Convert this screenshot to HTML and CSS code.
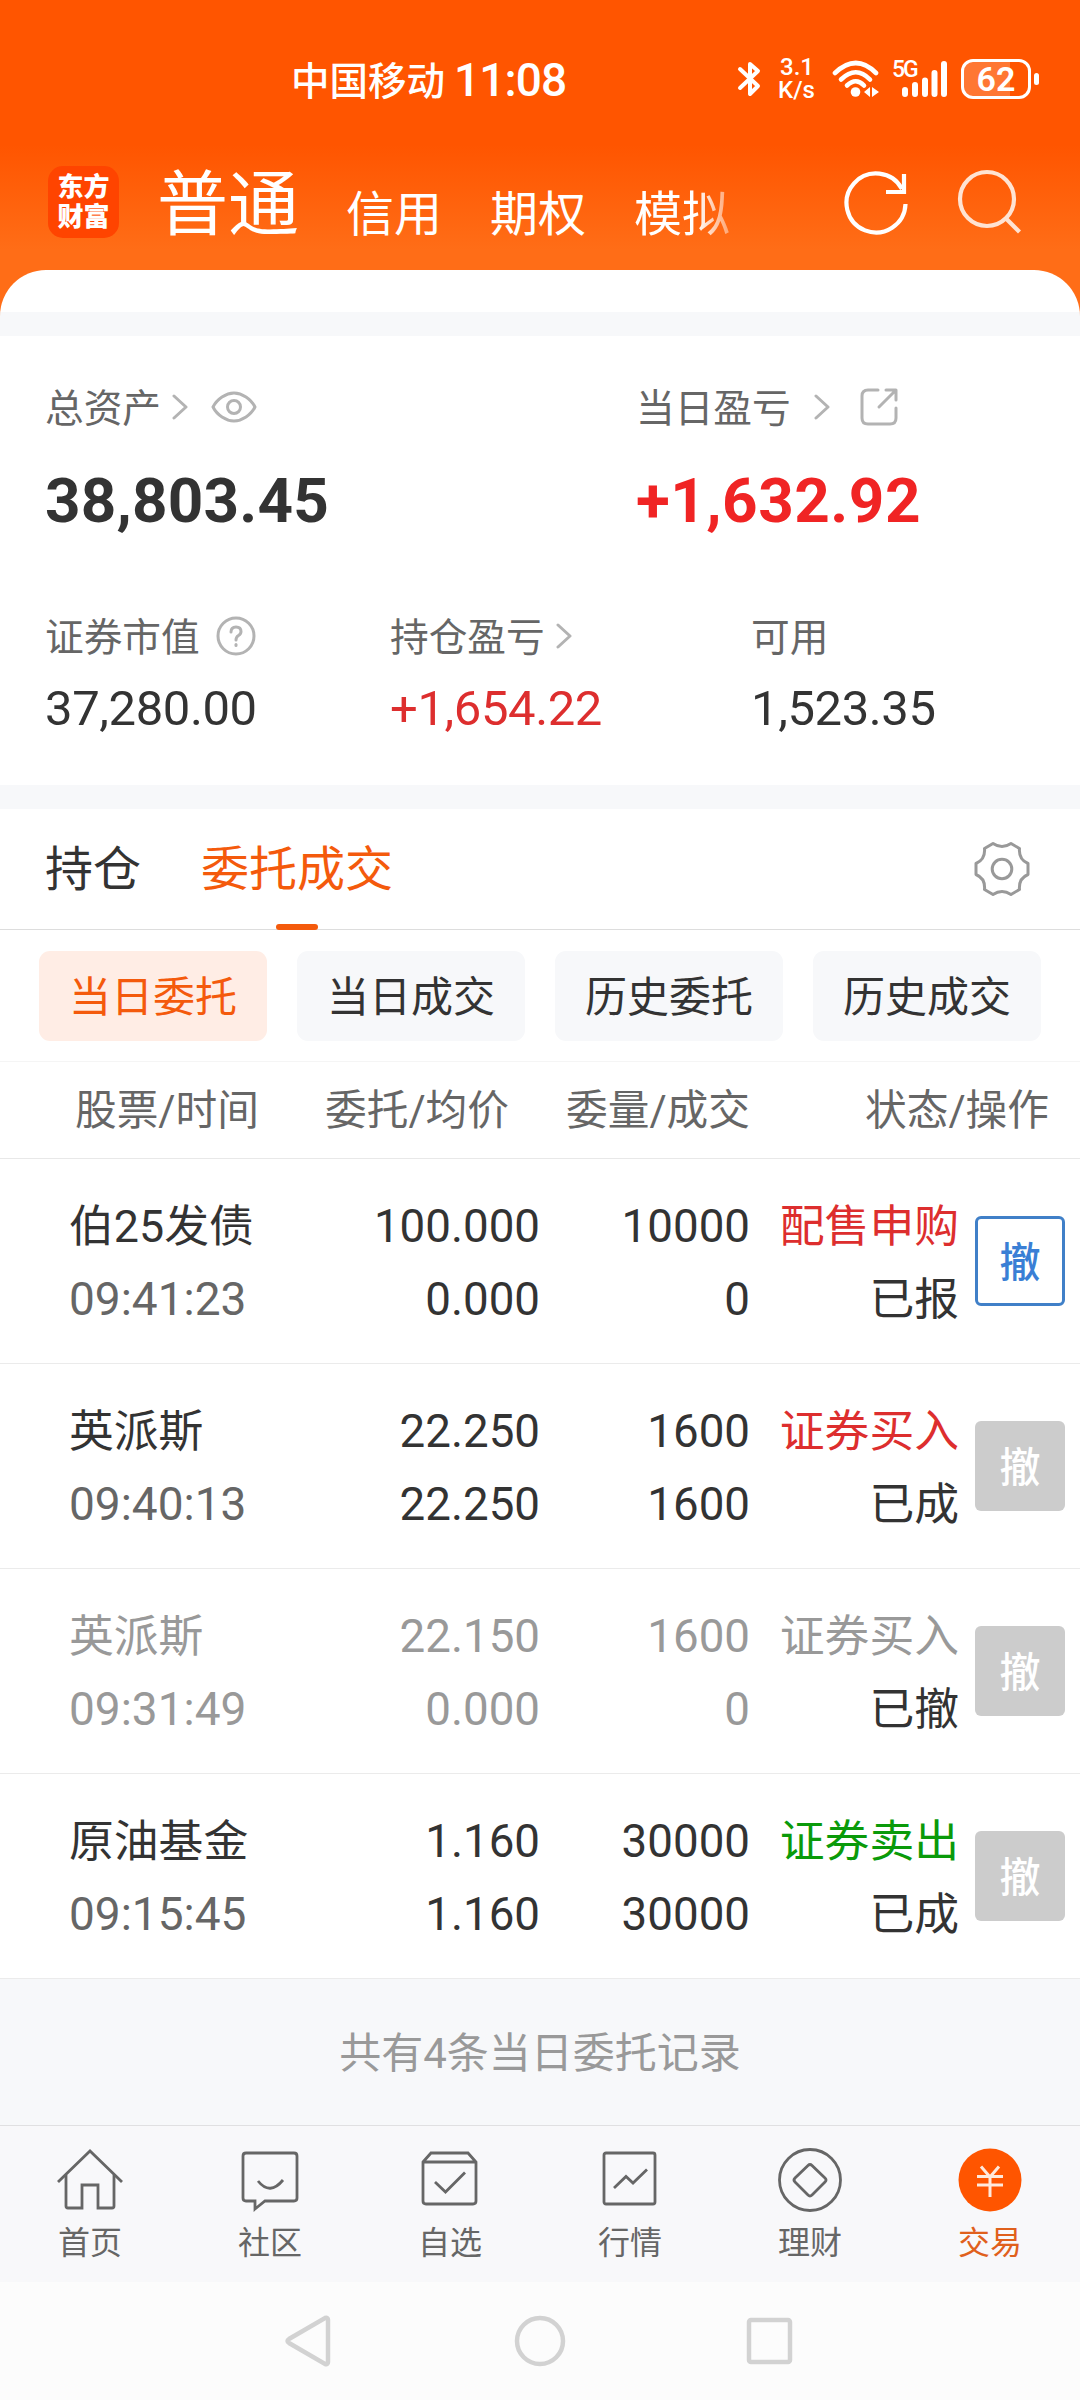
FILE: index.html
```html
<!DOCTYPE html>
<html lang="zh-CN">
<head>
    <meta charset="UTF-8">
    <meta name="viewport" content="width=device-width, initial-scale=1.0">
    <title>交易</title>
    <link rel="stylesheet" href="styles.css">
</head>
<body>
    <div id="header">
        <div id="statusbar">
            <div class="carrier">中国移动</div>
            <div class="clock">11:08</div>
            <svg class="bt" width="24" height="38" viewBox="0 0 24 38"><path d="M3 9 L21 26 L13 34 V4 L21 11 L3 28" fill="none" stroke="#fff" stroke-width="4" stroke-linejoin="round" stroke-linecap="round"/></svg>
            <div class="speed"><span>3.1</span><span>K/s</span></div>
            <svg class="wifi" width="48" height="38" viewBox="0 0 48 38">
                <g fill="none" stroke="#fff" stroke-width="4.6" stroke-linecap="round">
                    <path d="M3 13 Q24 -7 44 13"/><path d="M9 19.500 Q24 5 38 19.500"/><path d="M15 25.500 Q24 17 32 25.500"/>
                </g>
                <circle cx="23.500" cy="32" r="4.800" fill="#fff"/>
                <path d="M38 27 V37 L32 32Z M40 27 V37 L47 32Z" fill="#fff"/>
            </svg>
            <div class="signal">
                <span>5G</span>
                <svg width="54" height="38" viewBox="0 0 54 38"><path d="M11 30V34 M21 25V34 M31 20.500V34 M40.500 13V34 M50 4V34" stroke="#fff" stroke-width="6" stroke-linecap="round"/></svg>
            </div>
            <div class="battery"><span>62</span></div>
            <div class="batterytip"></div>
        </div>
        <div id="topnav">
            <div class="logo"><span>东方</span><span>财富</span></div>
            <div class="active">普通</div>
            <div class="item">信用</div>
            <div class="item">期权</div>
            <div class="item fade">模拟</div>
            <svg class="refresh" width="68" height="68" viewBox="0 0 68 68" fill="none" stroke="#fff" stroke-width="4.200"><path d="M62.500 35 A29.500 29.500 0 1 1 59 20"/><path d="M61 5 V23 H43"/></svg>
            <svg class="search" width="68" height="68" viewBox="0 0 68 68" fill="none" stroke="#ffe3d2" stroke-width="4.200"><circle cx="31" cy="30" r="27"/><path d="M50 49.500 L63.500 63"/></svg>
        </div>
    </div>
    <div id="sheet"></div>

    <div id="assets">
        <div class="row1">
            <div>
                <div class="label"><span>总资产</span>
                    <svg class="arrow" width="16" height="26" viewBox="0 0 16 26"><path d="M2 2 L14 13 L2 24"/></svg>
                    <svg class="eye" width="46" height="32" viewBox="0 0 46 32"><path d="M2 16 Q5 10 11 6 Q23 -2 35 6 Q41 10 44 16 Q41 22 35 26 Q23 34 11 26 Q5 22 2 16Z"/><circle cx="23" cy="16" r="6.500"/></svg>
                </div>
                <div class="big">38,803.45</div>
            </div>
            <div>
                <div class="label"><span>当日盈亏</span>
                    <svg class="arrow wide" width="16" height="26" viewBox="0 0 16 26"><path d="M2 2 L14 13 L2 24"/></svg>
                    <svg class="share" width="40" height="40" viewBox="0 0 40 40"><path d="M19 3 H9 Q3 3 3 9 V31 Q3 37 9 37 H31 Q37 37 37 31 V21"/><path d="M27 3 H37 V13 M36 4 L20 20"/></svg>
                </div>
                <div class="big red">+1,632.92</div>
            </div>
        </div>
        <div class="row2">
            <div>
                <div class="label"><span>证券市值</span>
                    <svg class="help" width="40" height="40" viewBox="0 0 40 40"><circle cx="20" cy="20" r="18"/><path d="M15 16 Q15 11 20 11 Q25 11 25 15.500 Q25 18 22.500 19.500 Q20 21 20 24"/><path d="M20 28.500 V29.500"/></svg>
                </div>
                <div class="num">37,280.00</div>
            </div>
            <div>
                <div class="label"><span>持仓盈亏</span>
                    <svg class="arrow" width="16" height="26" viewBox="0 0 16 26"><path d="M2 2 L14 13 L2 24"/></svg>
                </div>
                <div class="num red2">+1,654.22</div>
            </div>
            <div>
                <div class="label"><span>可用</span></div>
                <div class="num">1,523.35</div>
            </div>
        </div>
    </div>

    <div id="tabs">
        <div class="tab">持仓</div>
        <div class="tab on">委托成交</div>
        <svg class="gear" width="60" height="60" viewBox="-30 -30 60 60" fill="none" stroke="#999" stroke-width="3" stroke-linejoin="round"><path d="M-9 -25.500 Q0 -19.500 9 -25.500 L17.500 -20.500 Q16.500 -9.500 26 -5.500 V5.500 Q16.500 9.500 17.500 20.500 L9 25.500 Q0 19.500 -9 25.500 L-17.500 20.500 Q-16.500 9.500 -26 5.500 V-5.500 Q-16.500 -9.500 -17.500 -20.500Z"/><circle r="9.800"/></svg>
    </div>
    <div id="filters">
        <button class="on">当日委托</button>
        <button>当日成交</button>
        <button>历史委托</button>
        <button>历史成交</button>
    </div>
    <div id="thead">
        <div>股票/时间</div>
        <div>委托/均价</div>
        <div>委量/成交</div>
        <div>状态/操作</div>
    </div>
    <div id="orders">
        <div class="order">
            <div><p>伯25发债</p><p class="time">09:41:23</p></div>
            <div><p>100.000</p><p>0.000</p></div>
            <div><p>10000</p><p>0</p></div>
            <div><p class="buy">配售申购</p><p>已报</p></div>
            <button class="enabled">撤</button>
        </div>
        <div class="order">
            <div><p>英派斯</p><p class="time">09:40:13</p></div>
            <div><p>22.250</p><p>22.250</p></div>
            <div><p>1600</p><p>1600</p></div>
            <div><p class="buy">证券买入</p><p>已成</p></div>
            <button>撤</button>
        </div>
        <div class="order cancelled">
            <div><p>英派斯</p><p class="time">09:31:49</p></div>
            <div><p>22.150</p><p>0.000</p></div>
            <div><p>1600</p><p>0</p></div>
            <div><p>证券买入</p><p class="state">已撤</p></div>
            <button>撤</button>
        </div>
        <div class="order">
            <div><p>原油基金</p><p class="time">09:15:45</p></div>
            <div><p>1.160</p><p>1.160</p></div>
            <div><p>30000</p><p>30000</p></div>
            <div><p class="sell">证券卖出</p><p>已成</p></div>
            <button>撤</button>
        </div>
    </div>
    <div id="total">共有4条当日委托记录</div>

    <div id="bottomnav">
        <div>
            <svg width="68" height="68" viewBox="0 0 68 68"><path d="M2 35 L34 4 L66 35"/><path d="M10 28 V59 Q10 61 12 61 H26 V38 H42 V61 H56 Q58 61 58 59 V28"/></svg>
            <span>首页</span>
        </div>
        <div>
            <svg width="68" height="68" viewBox="0 0 68 68"><path d="M10 6 H58 Q61 6 61 9 V51 Q61 54 58 54 H29 L19 62 V54 H10 Q7 54 7 51 V9 Q7 6 10 6Z"/><path d="M22 34 Q34 49 47 33"/></svg>
            <span>社区</span>
        </div>
        <div>
            <svg width="68" height="68" viewBox="0 0 68 68"><path d="M7 15 L15 6 H52 L60 15 V54 Q60 57 57 57 H10 Q7 57 7 54Z M7 15 H60"/><path d="M19 35 L29.500 45 L49 25.500"/></svg>
            <span>自选</span>
        </div>
        <div>
            <svg width="68" height="68" viewBox="0 0 68 68"><rect x="8" y="6" width="51" height="51" rx="2"/><path d="M18 41 L30 29.500 L37 36 L51 22.500"/></svg>
            <span>行情</span>
        </div>
        <div>
            <svg width="68" height="68" viewBox="0 0 68 68"><circle cx="34" cy="33" r="30.500"/><path d="M32 18.500 Q34 16.500 36 18.500 L49 31 Q51 33 49 35 L36 48 Q34 50 32 48 L19 35 Q17 33 19 31Z"/></svg>
            <span>理财</span>
        </div>
        <div class="current">
            <svg width="68" height="68" viewBox="0 0 68 68"><circle cx="34" cy="33" r="31.500"/><path d="M25 19.500 L34 30 L43 19.500 M21 29.500 H47 M21 38 H47 M34 30 V50"/></svg>
            <span>交易</span>
        </div>
    </div>
    <div id="sysnav">
        <svg width="50" height="56" viewBox="0 0 50 56"><path d="M41 5 Q44 4 44 7 V49 Q44 52 41 51 L5 30 Q2 28 5 26Z"/></svg>
        <svg width="56" height="56" viewBox="0 0 56 56"><circle cx="28" cy="28" r="23"/></svg>
        <svg width="50" height="56" viewBox="0 0 50 56"><rect x="3" y="7" width="41" height="42" rx="2"/></svg>
    </div>
</body>
</html>
```

FILE: styles.css
```css
*
{
    box-sizing: border-box;
    margin: 0;
    padding: 0;
}
body
{
    width: 1080px;
    height: 2400px;
    overflow: hidden;
    background-color: #fcfcfc;
    font-family: Roboto, "Noto Sans CJK SC", sans-serif;
    color: #333;
}
svg
{
    display: block;
    flex: none;
}
button
{
    font-family: inherit;
    border: none;
}

/* header */
#header
{
    height: 320px;
    background: linear-gradient(#ff5500 0, #ff5500 145px, #ff6d17 250px, #ff6d17 320px);
    color: #fff;
}
#statusbar
{
    height: 158px;
    display: flex;
    align-items: center;
    padding-left: 291px;
}
.carrier
{
    width: 163px;
    padding-bottom: 3px;
    font-size: 38.5px;
    font-weight: 500;
}
.clock
{
    width: 283px;
    padding-top: 2px;
    font-size: 46px;
    font-weight: 500;
    letter-spacing: -0.9px;
}
.speed
{
    width: 48px;
    margin-left: 17px;
    font-size: 24px;
    line-height: 23px;
    font-weight: 500;
    display: flex;
    flex-direction: column;
}
.speed span:first-child
{
    margin-left: 2px;
}
.wifi
{
    margin-left: 6px;
}
.signal
{
    position: relative;
    margin-left: 14px;
}
.signal span
{
    position: absolute;
    left: -2px;
    top: -3px;
    font-size: 23px;
    line-height: 26px;
    font-weight: 500;
    letter-spacing: -2px;
}
.battery
{
    width: 70px;
    height: 40px;
    margin-left: 13px;
    border: 3px solid #fff;
    border-radius: 12px;
    background: linear-gradient(90deg, rgba(255, 255, 255, 0.2) 46px, transparent 46px);
    font-size: 34px;
    line-height: 35px;
    font-weight: 600;
    text-align: center;
}
.batterytip
{
    width: 5px;
    height: 12px;
    margin-left: 3px;
    border-radius: 3px;
    background-color: #fff;
}
#topnav
{
    display: flex;
    align-items: center;
    height: 88px;
    padding-left: 48px;
}
.logo
{
    width: 71px;
    height: 72px;
    border-radius: 15px;
    background-color: #ff4400;
    display: flex;
    flex-direction: column;
    align-items: center;
    justify-content: center;
    font-size: 26px;
    line-height: 30px;
    font-weight: 900;
}
#topnav .active
{
    width: 189px;
    margin-left: 38px;
    padding-bottom: 9px;
    font-size: 71px;
}
#topnav .item
{
    width: 144px;
    padding-top: 15px;
    font-size: 48px;
}
#topnav .fade
{
    width: 209px;
    -webkit-mask-image: linear-gradient(90deg, #000 62px, transparent 118px);
    mask-image: linear-gradient(90deg, #000 62px, transparent 118px);
}
.refresh,
.search
{
    margin-top: 2px;
}
.search
{
    margin-left: 45px;
}
#sheet
{
    height: 66px;
    margin-top: -50px;
    border-radius: 46px 46px 0 0;
    background: linear-gradient(#fff 42px, #f7f8fa 42px);
}

/* assets */
#assets
{
    height: 473px;
    padding: 43px 0 0 45px;
    background-color: #fff;
    border-bottom: 24px solid #f7f8fa;
}
.row1
{
    display: grid;
    grid-template-columns: 591px 1fr;
    height: 229px;
}
.row2
{
    display: grid;
    grid-template-columns: 345px 361px 1fr;
}
.label
{
    display: flex;
    align-items: center;
    height: 56px;
    font-size: 38.7px;
    color: #666;
}
.label span
{
    padding-bottom: 5px;
}
.label svg
{
    fill: none;
    stroke: #b3b3b3;
    stroke-width: 3px;
    stroke-linecap: round;
    stroke-linejoin: round;
}
.arrow
{
    margin-left: 11px;
}
.arrow.wide
{
    margin-left: 23px;
}
.eye
{
    margin-left: 23px;
}
.share
{
    margin-left: 29px;
}
.help
{
    margin-left: 16px;
}
.big
{
    margin-top: 29px;
    font-size: 62px;
    line-height: 74px;
    font-weight: 700;
    letter-spacing: 0.2px;
}
.red
{
    color: #f02424;
    letter-spacing: 0.5px;
}
.num
{
    margin-top: 15px;
    font-size: 49px;
    line-height: 60px;
    letter-spacing: -0.4px;
}
.red2
{
    color: #dd2e2e;
}

/* tabs */
#tabs
{
    display: flex;
    align-items: center;
    height: 121px;
    padding: 0 48px 0 45px;
    background-color: #fff;
    border-bottom: 1px solid #ddd;
}
.tab
{
    margin-right: 60px;
    font-size: 48px;
    line-height: 121px;
}
.tab.on
{
    position: relative;
    color: #f45a0c;
}
.tab.on::after
{
    content: "";
    position: absolute;
    left: 75px;
    bottom: 0;
    width: 42px;
    height: 6px;
    border-radius: 3px;
    background-color: #f45a0c;
}
.gear
{
    margin-left: auto;
}
#filters
{
    display: flex;
    gap: 30px;
    height: 132px;
    padding: 21px 39px;
    background-color: #fff;
    border-bottom: 1px solid #f5f5f5;
}
#filters button
{
    width: 228px;
    height: 90px;
    padding-bottom: 5px;
    border-radius: 11px;
    background-color: #f7f8fa;
    font-size: 42px;
    color: #333;
}
#filters .on
{
    background-color: #ffede5;
    color: #f45a0c;
}

/* orders */
#thead
{
    display: grid;
    grid-template-columns: 244px 190px 241px 299px;
    height: 97px;
    padding-left: 75px;
    background-color: #fff;
    border-bottom: 1px solid #e8e8e8;
    font-size: 41.7px;
    line-height: 98px;
    white-space: nowrap;
    color: #666;
    text-align: right;
}
#thead div:first-child
{
    text-align: left;
}
.order
{
    display: grid;
    grid-template-columns: 301px 170px 210px 209px 90px;
    align-items: center;
    height: 205px;
    padding: 3px 0 0 69px;
    background-color: #fff;
    border-bottom: 1px solid #ebebeb;
    font-size: 45.7px;
    line-height: 73px;
    text-align: right;
}
.order div:first-child,
.order div:nth-child(4)
{
    font-size: 44.8px;
}
.order div:first-child
{
    text-align: left;
}
.order .time
{
    font-size: 46px;
    color: #666;
}
.order button
{
    width: 90px;
    height: 90px;
    margin: -3px 0 0 16px;
    padding-bottom: 5px;
    border-radius: 6px;
    background-color: #ccc;
    font-size: 41px;
    font-weight: 500;
    color: #fff;
}
.order .enabled
{
    border: 3px solid #4080c8;
    background-color: #fff;
    color: #3a7fd5;
}
.buy
{
    color: #dd2e2e;
}
.sell
{
    color: #0a9a0a;
}
.cancelled,
.cancelled .time
{
    color: #999;
}
.cancelled .state
{
    color: #333;
}
#total
{
    height: 146px;
    background-color: #f7f8fa;
    font-size: 42px;
    line-height: 150px;
    text-align: center;
    color: #999;
}

/* bottom */
#bottomnav
{
    display: flex;
    height: 157px;
    background-color: #f8f8fa;
    border-top: 1px solid #e0e0e2;
}
#bottomnav div
{
    width: 180px;
    padding-top: 21px;
    display: flex;
    flex-direction: column;
    align-items: center;
    font-size: 32px;
    line-height: 40px;
    color: #666;
}
#bottomnav span
{
    margin-top: 8px;
}
#bottomnav svg
{
    fill: none;
    stroke: #666;
    stroke-width: 2.8px;
}
#bottomnav .current
{
    color: #e0601c;
}
#bottomnav .current circle
{
    fill: #ff5500;
    stroke: none;
}
#bottomnav .current path
{
    stroke: #ffe9dc;
    stroke-width: 3px;
}
#sysnav
{
    display: flex;
    justify-content: center;
    gap: 178px;
    padding-top: 31px;
}
#sysnav svg
{
    fill: none;
    stroke: #d2d2d2;
    stroke-width: 4.5px;
}
```
